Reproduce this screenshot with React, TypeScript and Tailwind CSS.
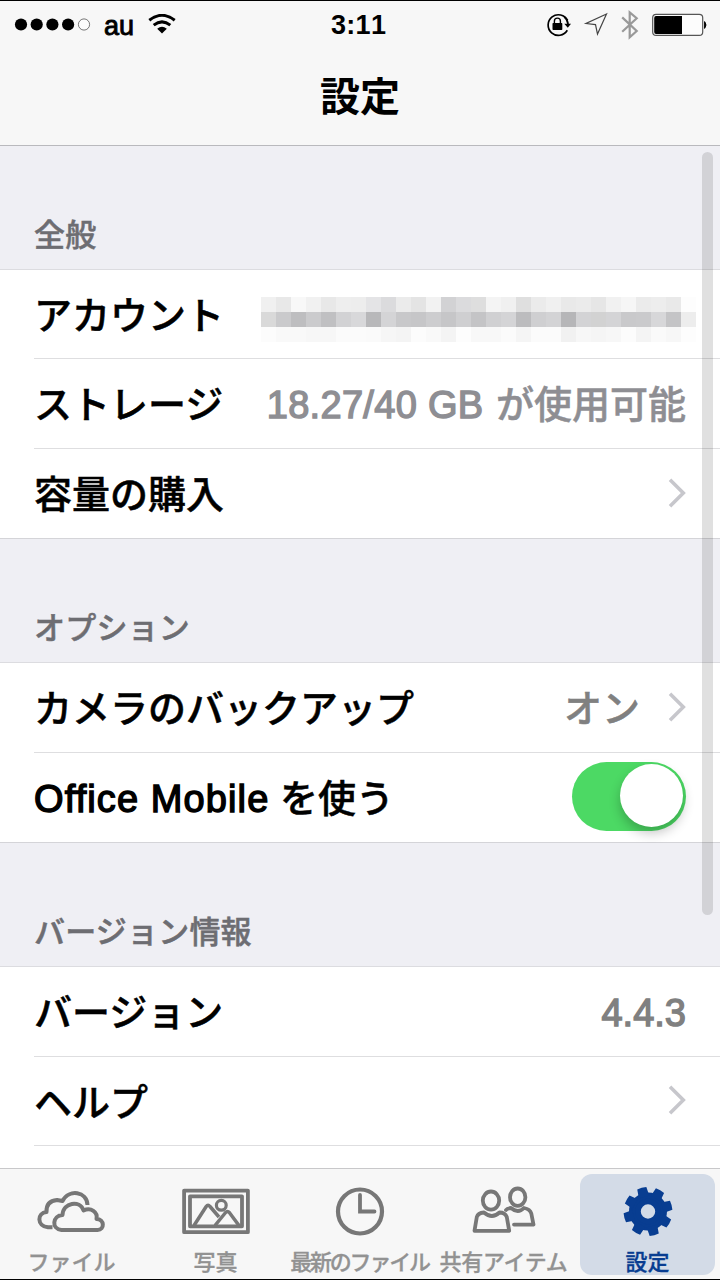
import type { ReactNode } from 'react';

const JP = "font-['Liberation_Sans','Noto_Sans_CJK_JP',sans-serif]";

const mosaic: string[][] = [
  ['f0f0f0', 'e8e8e8', 'f8f8f8', 'f1f1f1', 'e8e8e8', 'eeeeee', 'ededed', 'e4e4e6', 'dbdbdd', 'ebebeb', 'e4e4e4', 'f2f2f2', 'd2d2d4', 'dbdbdd', 'dedede', 'f4f4f4', 'f0f0f0', 'dfdfdf', 'ebebeb', 'f0f0f0', 'e9e9e9', 'ebebeb', 'e6e6e6', 'f1f1f1', 'f6f6f6', 'ebebeb', 'ededed', 'e9e9e9', 'fdfdfd'],
  ['d9d9d9', 'cacacc', 'bebec0', 'cbcbcd', 'c0c0c2', 'd2d2d4', 'd8d8da', 'b8b8ba', 'd4d4d6', 'c8c8ca', 'c6c6c8', 'cdcdcf', 'c6c6c8', 'cfcfd1', 'c4c4c6', 'd0d0d2', 'd4d4d6', 'bcbcbe', 'cfcfd1', 'd3d3d5', 'b6b6b8', 'd3d3d5', 'd2d2d2', 'd4d4d6', 'c9c9cb', 'cacacc', 'd7d7d9', 'c4c4c6', 'ededed'],
  ['fcfcfc', 'f9f9f9', 'f9f9f9', 'f7f7f7', 'f7f7f7', 'fbfbfb', 'fbfbfb', 'fafafa', 'f6f6f6', 'f4f4f4', 'fcfcfc', 'f9f9f9', 'f4f4f4', 'fdfdfd', 'f8f8f8', 'f8f8f8', 'fbfbfb', 'f5f5f5', 'fbfbfb', 'fbfbfb', 'f1f1f1', 'f7f7f7', 'f5f5f5', 'f7f7f7', 'fcfcfc', 'f4f4f4', 'fafafa', 'f7f7f7', 'fdfdfd'],
];

function Mosaic() {
  return (
    <div className="grid grid-cols-[repeat(29,15px)] auto-rows-[15px] mt-[27px] -mr-[10px] self-start">
      {mosaic.flat().map((c, i) => (
        <div key={i} style={{ backgroundColor: '#' + c }} />
      ))}
    </div>
  );
}

function SectionHeader({ children }: { children: ReactNode }) {
  return (
    <div className="h-[124px] shrink-0 bg-[#efeff4] border-b border-[#dcdce0] pl-[34px] pt-[74px]">
      <div className="text-[31px] leading-[32px] tracking-[0.2px] text-[#6d6d72] font-medium [-webkit-text-stroke:0.5px_currentColor]">{children}</div>
    </div>
  );
}

function Row({ label, children, last, h = 'h-[90px]' }: { label: ReactNode; children?: ReactNode; last?: boolean; h?: string }) {
  return (
    <div className={`${h} shrink-0 bg-white ${last ? 'border-b border-[#d4d4d8]' : ''} pl-[34px]`}>
      <div className={`h-full flex items-center pr-[34px] ${last ? '' : 'border-b border-[#dedee0]'}`}>
        <div className="pt-[3px] text-[38px] leading-[40px] text-black font-medium whitespace-nowrap [-webkit-text-stroke:0.5px_currentColor]">{label}</div>
        <div className="flex-1" />
        {children}
      </div>
    </div>
  );
}

function Chevron() {
  return (
    <svg className="w-[18px] h-[30px] mb-[2px] shrink-0" viewBox="0 0 18 30" fill="none" stroke="#c7c7cc" strokeWidth="3.6">
      <path d="M2 1.7 15.3 15 2 28.3" />
    </svg>
  );
}

function Value({ children, color = 'text-[#808080]' }: { children: ReactNode; color?: string }) {
  return <div className={`pt-[2px] text-[38px] leading-[40px] font-medium whitespace-nowrap [-webkit-text-stroke:0.5px_currentColor] ${color}`}>{children}</div>;
}

function Latin({ children, cls = '' }: { children: ReactNode; cls?: string }) {
  return <span className={`[-webkit-text-stroke:1.4px_currentColor] ${cls}`}>{children}</span>;
}

function StatusBar() {
  return (
    <div className="h-[48px] border-t border-black flex items-center">
      <div className="flex items-center w-[331px] h-full">
        <svg className="w-[78px] h-[16px] ml-[14px]" viewBox="0 0 78 16">
          <circle cx="7" cy="7.500" r="6.1" />
          <circle cx="22.7" cy="7.500" r="6.1" />
          <circle cx="38.4" cy="7.500" r="6.1" />
          <circle cx="54.1" cy="7.500" r="6.1" />
          <circle cx="70" cy="7.500" r="5.6" fill="#fcfcfc" stroke="#555" strokeWidth=".8" />
        </svg>
        <div className="ml-[12px] w-[30px] text-[27px] leading-[28px] mt-[2px] [-webkit-text-stroke:0.9px_black]">au</div>
        <svg className="w-[30px] h-[22px] ml-[13px]" viewBox="0 1 30 22" fill="none" stroke="black" strokeWidth="3">
          <path d="M2.3 7.2Q15-2.6 27.7 7.2M6.7 12.1Q15 5.7 23.3 12.1" />
          <path d="M10.2 15.8Q15 11.8 19.8 15.8L15 20.5Z" fill="black" stroke="none" />
        </svg>
      </div>
      <div className="font-bold text-[27px] leading-[28px] tracking-[0.3px] [font-kerning:none] w-[215px]">3:11</div>
      <svg className="w-[162px] h-[32px]" viewBox="546 8 162 32" fill="none">
        <path d="M567.3 29.3A10.3 10.3 0 1 1 567.6 19.4" stroke="black" strokeWidth="1.7" />
        <path d="M564.2 15.9A10.3 10.3 0 0 1 568 23" stroke="black" strokeWidth="1.7" />
        <path d="M564.300 22.8H571L567.8 26.8Z" fill="black" />
        <rect x="552.5" y="22" width="9.8" height="7" rx=".7" fill="black" />
        <path d="M554.4 22.5V20.100A3 3 0 0 1 560.400 20.100V22.5" stroke="black" strokeWidth="1.4" />
        <path d="M606.5 13 586 22.5 595.5 23.6 597.5 33Z" stroke="#444" strokeWidth="1.2" />
        <path d="M622.2 16.4 636.7 30 629.7 36.2V11.4L636.7 17.2 622.2 30.8" stroke="#999" strokeWidth="2.2" />
        <rect x="652.7" y="13.3" width="50" height="21" rx="3.4" fill="#fcfcfc" stroke="#555" strokeWidth="1.2" />
        <path d="M656 15H682V33H656Q654.2 33 654.2 31V17Q654.2 15 656 15Z" fill="black" />
        <path d="M704.6 20.6Q707.4 24 704.6 27.4Z" fill="black" stroke="black" />
      </svg>
    </div>
  );
}

function CloudIcon() {
  return (
    <svg className="w-[72px] h-[52px] shrink-0" viewBox="36 1185 72 52" fill="none" stroke="#777" strokeWidth="4" strokeLinejoin="round">
      <path d="M52.5 1227.300H48C36.500 1226 37 1213 46.500 1212Q46 1201 57 1200L62.500 1201C69 1188.500 87 1191.500 87.500 1205" />
      <path d="M61.500 1230C51 1229 52.500 1215.500 62.500 1215C63 1202.500 80 1199.500 83.500 1210.500C91 1207 98 1212 96.500 1219C104.500 1219 105 1230 97.500 1230Z" fill="#f7f7f7" />
    </svg>
  );
}

function PhotoIcon() {
  return (
    <svg className="w-[72px] h-[52px] shrink-0" viewBox="180 1185 72 52" fill="none" stroke="#777" strokeWidth="3.8" strokeLinejoin="round">
      <rect x="184.1" y="1190.6" width="63.8" height="41.6" />
      <rect x="190" y="1196.3" width="52" height="30" />
      <path d="M194 1225.5 206.2 1206.5Q208 1204 210 1206.5L219 1217M215 1225.5 225.6 1212.5Q227.5 1210.5 229.3 1212.5L239 1225.5" strokeWidth="3.5" />
      <circle cx="221.3" cy="1205.3" r="4.9" strokeWidth="3.2" />
    </svg>
  );
}

function ClockIcon() {
  return (
    <svg className="w-[72px] h-[52px] shrink-0" viewBox="324 1185 72 52" fill="none" stroke="#777" strokeWidth="4.2">
      <circle cx="360" cy="1211.5" r="22" />
      <path d="M360 1195V1211.5H374.5" strokeWidth="3.8" strokeLinecap="round" />
    </svg>
  );
}

function PeopleIcon() {
  return (
    <svg className="w-[72px] h-[52px] shrink-0" viewBox="468 1185 72 52" fill="none" stroke="#777" strokeWidth="3.8" strokeLinejoin="round" strokeLinecap="round">
      <ellipse cx="517.7" cy="1197.2" rx="7.7" ry="8.700" />
      <path d="M506 1210Q507 1208.5 511 1208Q518 1214 524 1208Q530 1209 531.3 1213.5L533.5 1224.6H514" />
      <ellipse cx="491" cy="1200.600" rx="8.2" ry="9.1" />
      <path d="M474.5 1230.8 476.8 1217Q478 1213 484 1212.5Q492 1219.5 499.5 1212.5Q505 1212.5 506.8 1217L509.2 1230.8Z" fill="#f7f7f7" />
    </svg>
  );
}

function GearIcon() {
  return (
    <svg className="w-[72px] h-[52px] shrink-0" viewBox="-36 -26.5 72 52" fill="#083d91">
      <circle r="14" fill="none" stroke="#083d91" strokeWidth="10" />
      <circle r="10" fill="none" stroke="#083d91" strokeWidth="5.6" />
      {[30, 75, 120, 165, 210, 255, 300, 345].map((a) => (
        <path key={a} d="M15-5.8 17.5-5.2 24-4.7Q24.9 0 24 4.7L17.5 5.2 15 5.8Z" transform={`rotate(${a})`} />
      ))}
    </svg>
  );
}

function Tab({ icon, label, active, cls = '' }: { icon: ReactNode; label: string; active?: boolean; cls?: string }) {
  return (
    <div className="w-[144px] h-full pl-[4px] pr-[5px] pt-[5px]">
      <div className={`h-[101px] flex flex-col items-center rounded-[12px] pt-[11px] ${active ? 'bg-[#d3dbe7]' : ''}`}>
        {icon}
        <div className={`mt-[12px] text-[22px] leading-[28px] font-medium whitespace-nowrap [-webkit-text-stroke:0.3px_currentColor] ${active ? 'text-[#083d91]' : 'text-[#929292]'} ${cls}`}>{label}</div>
      </div>
    </div>
  );
}

export default function App() {
  return (
    <div lang="ja" className={`relative w-[720px] h-[1280px] overflow-hidden bg-white flex flex-col ${JP}`}>
      <header className="h-[146px] shrink-0 bg-[#f7f7f7] border-b border-[#b9b9bd]">
        <StatusBar />
        <h1 className="text-center text-[40px] leading-[48px] font-bold mt-[25px]">設定</h1>
      </header>
      <main className="h-[1022px] shrink-0 overflow-hidden flex flex-col">
        <SectionHeader>全般</SectionHeader>
        <Row label="アカウント" h="h-[89px]"><Mosaic /></Row>
        <Row label="ストレージ">
          <Value color="text-[#8e8e93]"><Latin cls="tracking-[0.3px] mr-[2px]">18.27/40 GB</Latin> が使用可能</Value>
        </Row>
        <Row label="容量の購入" last><Chevron /></Row>
        <SectionHeader>オプション</SectionHeader>
        <Row label="カメラのバックアップ">
          <Value>オン</Value>
          <div className="ml-[28px] flex"><Chevron /></div>
        </Row>
        <Row label={<><Latin cls="tracking-[1.1px]">Office Mobile</Latin> を使う</>} last>
          <div className="w-[114px] h-[69px] mb-[2px] rounded-full bg-[#4cd964] p-[3px] pt-[2px] flex justify-end">
            <div className="w-[63px] h-[63px] rounded-full bg-white shadow-[0_6px_12px_rgba(0,0,0,0.24)]" />
          </div>
        </Row>
        <SectionHeader>バージョン情報</SectionHeader>
        <Row label="バージョン"><Value><Latin>4.4.3</Latin></Value></Row>
        <Row label="ヘルプ" h="h-[89px]"><Chevron /></Row>
      </main>
      <nav className="h-[112px] shrink-0 flex bg-[#f7f7f7] border-t border-t-[#c8c8ca] border-b border-b-black">
        <Tab icon={<CloudIcon />} label="ファイル" />
        <Tab icon={<PhotoIcon />} label="写真" />
        <Tab icon={<ClockIcon />} label="最新のファイル" cls="tracking-[-2.2px]" />
        <Tab icon={<PeopleIcon />} label="共有アイテム" cls="tracking-[-0.3px]" />
        <Tab icon={<GearIcon />} label="設定" active />
      </nav>
      <div className="absolute left-[702px] top-[152px] w-[11px] h-[763px] rounded-full bg-black/12" />
    </div>
  );
}
